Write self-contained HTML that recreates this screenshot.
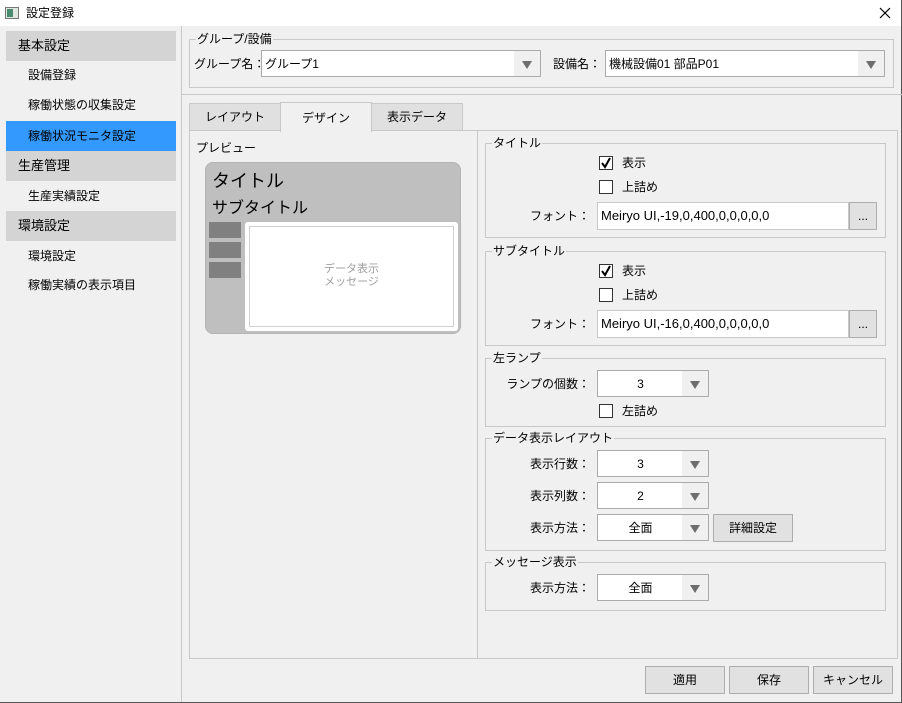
<!DOCTYPE html>
<html><head><meta charset="utf-8">
<style>
*{box-sizing:border-box;margin:0;padding:0}
body{width:902px;height:703px;background:#f0f0f0;font-family:"Liberation Sans","Noto Sans CJK JP",sans-serif;font-size:12px;color:#000;position:relative;overflow:hidden}
.a{position:absolute}
.t{position:absolute;white-space:nowrap;line-height:14px}
.hd{position:absolute;left:6px;width:170px;height:30px;background:#d4d4d4;padding:8px 0 0 12px;font-size:13px;line-height:14px}
.it{position:absolute;left:28px;font-size:12px;line-height:14px;white-space:nowrap}
.gb{position:absolute;border:1px solid #c8c8c8}
.gl{position:absolute;top:-8px;left:6px;background:#f0f0f0;padding:0 1px;line-height:14px;font-size:12px;white-space:nowrap}
.cmb{position:absolute;height:27px;border:1px solid #ababab;background:#fff}
.cmb .ar{position:absolute;right:0;top:0;width:26px;height:25px;background:#f0f0f0}
.cmb .ar:after{content:"";position:absolute;left:8px;top:10px;border-left:5px solid transparent;border-right:5px solid transparent;border-top:8px solid #6d6d6d}
.cmb .v{position:absolute;top:6px;line-height:14px;white-space:nowrap}
.cb{position:absolute;width:14px;height:14px;border:1px solid #333;background:#fff}
.btn{position:absolute;height:28px;border:1px solid #adadad;background:#e1e1e1;text-align:center;line-height:26px}
.lbl{position:absolute;text-align:right;width:90px;line-height:14px;white-space:nowrap}
</style></head><body>
<div class="a" style="left:0;top:0;width:902px;height:26px;background:#fff"></div>
<div class="a" style="left:5px;top:7px;width:14px;height:12px;border:1px solid #777;background:#dfe8e0"></div>
<div class="a" style="left:7px;top:9px;width:6px;height:8px;background:#4a8a6e"></div>
<div class="t" style="left:26px;top:6px">設定登録</div>
<svg class="a" style="left:879px;top:7px" width="12" height="12"><path d="M1 1L11 11M11 1L1 11" stroke="#000" stroke-width="1.2"/></svg>
<div class="a" style="left:901px;top:0;width:1px;height:703px;background:#555"></div>
<div class="a" style="left:0;top:702px;width:902px;height:1px;background:#555"></div>

<div class="a" style="left:181px;top:26px;width:1px;height:676px;background:#c8c8c8"></div>
<div class="hd" style="top:31px">基本設定</div>
<div class="it" style="top:68px">設備登録</div>
<div class="it" style="top:98px">稼働状態の収集設定</div>
<div class="a" style="left:6px;top:121px;width:170px;height:30px;background:#3399ff"></div>
<div class="it" style="top:129px">稼働状況モニタ設定</div>
<div class="hd" style="top:151px">生産管理</div>
<div class="it" style="top:189px">生産実績設定</div>
<div class="hd" style="top:211px">環境設定</div>
<div class="it" style="top:249px">環境設定</div>
<div class="it" style="top:278px">稼働実績の表示項目</div>

<div class="gb" style="left:189px;top:39px;width:705px;height:49px"><div class="gl">グループ/設備</div></div>
<div class="t" style="left:194px;top:57px">グループ名：</div>
<div class="cmb" style="left:261px;top:50px;width:280px"><div class="v" style="left:3px">グループ1</div><div class="ar"></div></div>
<div class="t" style="left:553px;top:57px">設備名：</div>
<div class="cmb" style="left:605px;top:50px;width:280px"><div class="v" style="left:3px">機械設備01 部品P01</div><div class="ar"></div></div>
<div class="a" style="left:182px;top:94px;width:720px;height:1px;background:#c8c8c8"></div>

<div class="a" style="left:189px;top:130px;width:709px;height:529px;border:1px solid #c8c8c8"></div>
<div class="a" style="left:189px;top:103px;width:92px;height:28px;border:1px solid #c8c8c8;background:#e0e0e0;text-align:center;line-height:26px">レイアウト</div>
<div class="a" style="left:371px;top:103px;width:92px;height:28px;border:1px solid #c8c8c8;background:#e0e0e0;text-align:center;line-height:26px">表示データ</div>
<div class="a" style="left:280px;top:102px;width:92px;height:30px;border:1px solid #c8c8c8;border-bottom:none;background:#f0f0f0;text-align:center;line-height:30px">デザイン</div>
<div class="a" style="left:477px;top:131px;width:1px;height:527px;background:#c8c8c8"></div>

<div class="t" style="left:196px;top:141px">プレビュー</div>
<div class="a" style="left:205px;top:162px;width:256px;height:172px;background:#bfbfbf;border-radius:8px;border:1px solid #b4b4b4"></div>
<div class="t" style="left:212px;top:171px;font-size:18px;line-height:20px">タイトル</div>
<div class="t" style="left:212px;top:200px;font-size:16px;line-height:18px">サブタイトル</div>
<div class="a" style="left:209px;top:222px;width:32px;height:16px;background:#808080"></div>
<div class="a" style="left:209px;top:242px;width:32px;height:16px;background:#808080"></div>
<div class="a" style="left:209px;top:262px;width:32px;height:16px;background:#808080"></div>
<div class="a" style="left:245px;top:222px;width:213px;height:109px;background:#fff;border-radius:3px"></div>
<div class="a" style="left:249px;top:226px;width:205px;height:101px;border:1px solid #d0d0d0"></div>
<div class="t" style="left:245px;top:263px;width:213px;text-align:center;color:#a0a0a0;font-size:11px;line-height:13px">データ表示<br>メッセージ</div>

<div class="gb" style="left:485px;top:143px;width:401px;height:95px"><div class="gl">タイトル</div></div>
<div class="cb" style="left:599px;top:156px"></div>
<svg class="a" style="left:599px;top:156px" width="14" height="14"><path d="M3 7L6 11L11 2" stroke="#000" stroke-width="2" fill="none"/></svg>
<div class="t" style="left:622px;top:156px">表示</div>
<div class="cb" style="left:599px;top:180px"></div><div class="t" style="left:622px;top:180px">上詰め</div>
<div class="lbl" style="left:500px;top:209px">フォント：</div>
<div class="a" style="left:597px;top:202px;width:252px;height:28px;border:1px solid #c8c8c8;background:#fff;padding:6px 0 0 3px;line-height:14px;font-size:13px">Meiryo UI,-19,0,400,0,0,0,0,0</div>
<div class="btn" style="left:849px;top:202px;width:28px;height:28px">...</div>

<div class="gb" style="left:485px;top:251px;width:401px;height:95px"><div class="gl">サブタイトル</div></div>
<div class="cb" style="left:599px;top:264px"></div>
<svg class="a" style="left:599px;top:264px" width="14" height="14"><path d="M3 7L6 11L11 2" stroke="#000" stroke-width="2" fill="none"/></svg>
<div class="t" style="left:622px;top:264px">表示</div>
<div class="cb" style="left:599px;top:288px"></div><div class="t" style="left:622px;top:288px">上詰め</div>
<div class="lbl" style="left:500px;top:317px">フォント：</div>
<div class="a" style="left:597px;top:310px;width:252px;height:28px;border:1px solid #c8c8c8;background:#fff;padding:6px 0 0 3px;line-height:14px;font-size:13px">Meiryo UI,-16,0,400,0,0,0,0,0</div>
<div class="btn" style="left:849px;top:310px;width:28px;height:28px">...</div>

<div class="gb" style="left:485px;top:358px;width:401px;height:69px"><div class="gl">左ランプ</div></div>
<div class="lbl" style="left:500px;top:377px">ランプの個数：</div>
<div class="cmb" style="left:597px;top:370px;width:112px"><div class="v" style="left:0;width:85px;text-align:center">3</div><div class="ar"></div></div>
<div class="cb" style="left:599px;top:404px"></div><div class="t" style="left:622px;top:404px">左詰め</div>

<div class="gb" style="left:485px;top:438px;width:401px;height:113px"><div class="gl">データ表示レイアウト</div></div>
<div class="lbl" style="left:500px;top:457px">表示行数：</div>
<div class="cmb" style="left:597px;top:450px;width:112px"><div class="v" style="left:0;width:85px;text-align:center">3</div><div class="ar"></div></div>
<div class="lbl" style="left:500px;top:489px">表示列数：</div>
<div class="cmb" style="left:597px;top:482px;width:112px"><div class="v" style="left:0;width:85px;text-align:center">2</div><div class="ar"></div></div>
<div class="lbl" style="left:500px;top:521px">表示方法：</div>
<div class="cmb" style="left:597px;top:514px;width:112px"><div class="v" style="left:0;width:85px;text-align:center">全面</div><div class="ar"></div></div>
<div class="btn" style="left:713px;top:514px;width:80px">詳細設定</div>

<div class="gb" style="left:485px;top:562px;width:401px;height:49px"><div class="gl">メッセージ表示</div></div>
<div class="lbl" style="left:500px;top:581px">表示方法：</div>
<div class="cmb" style="left:597px;top:574px;width:112px"><div class="v" style="left:0;width:85px;text-align:center">全面</div><div class="ar"></div></div>

<div class="btn" style="left:645px;top:666px;width:80px">適用</div>
<div class="btn" style="left:729px;top:666px;width:80px">保存</div>
<div class="btn" style="left:813px;top:666px;width:80px">キャンセル</div>
</body></html>
